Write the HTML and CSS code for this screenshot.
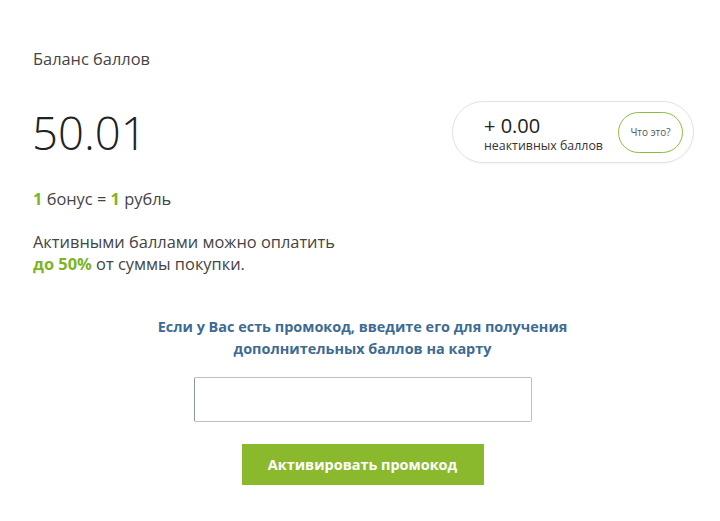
FILE: index.html
```html
<!DOCTYPE html>
<html lang="ru">
<head>
<meta charset="utf-8">
<link rel="stylesheet" href="styles.css">
</head>
<body>
<div class="page">
  <div class="label">Баланс баллов</div>
  <div class="balance-row">
    <div class="balance">50.01</div>
    <div class="pill">
      <div class="pill-text">
        <div class="pill-amount">+ 0.00</div>
        <div class="pill-sub">неактивных баллов</div>
      </div>
      <button class="what">Что это?</button>
    </div>
  </div>
  <p class="rate"><b class="green">1</b> бонус = <b class="green">1</b> рубль</p>
  <p class="info">Активными баллами можно оплатить<br><b class="green">до 50%</b> от суммы покупки.</p>
  <div class="promo">
    <p class="promo-title">Если у Вас есть промокод, введите его для получения<br>дополнительных баллов на карту</p>
    <input class="promo-input" type="text">
    <button class="promo-btn">Активировать промокод</button>
  </div>
</div>
</body>
</html>
```
FILE: styles.css
```css
html, body {
  margin: 0;
  background: #ffffff;
}
body {
  font-family: "Open Sans", "Liberation Sans", sans-serif;
  color: #333333;
}
.page {
  padding: 48px 26px 0 33px;
}
.label {
  font-size: 16.4px;
  line-height: 22px;
  color: #444444;
}
.balance-row {
  display: flex;
  justify-content: space-between;
  align-items: center;
  margin-top: 31px;
}
.balance {
  font-size: 45.5px;
  font-weight: 300;
  line-height: 60px;
  color: #222222;
  margin-left: -1px;
}
.pill {
  display: flex;
  align-items: center;
  gap: 14px;
  box-sizing: border-box;
  width: 242px;
  height: 62px;
  border: 1px solid #e2e2e2;
  border-radius: 31px;
  padding: 0 10px 0 31px;
  box-shadow: 0 1px 2px rgba(0,0,0,0.04);
}
.pill-text {
  flex: 1;
  white-space: nowrap;
  margin-top: 8px;
}
.pill-amount {
  font-size: 20px;
  line-height: 20px;
  color: #222222;
}
.pill-sub {
  font-size: 12.4px;
  line-height: 20px;
  color: #333333;
}
.what {
  flex: none;
  width: 65px;
  height: 41px;
  border: 1px solid #8cbd3a;
  border-radius: 21px;
  background: #ffffff;
  font-family: "Open Sans", "Liberation Sans", sans-serif;
  font-size: 10px;
  color: #555555;
  padding: 0;
}
.rate {
  margin: 25px 0 0;
  font-size: 16.4px;
  line-height: 22px;
  color: #444444;
}
.info {
  margin: 21px 0 0;
  font-size: 16.4px;
  line-height: 22px;
  color: #444444;
}
.green {
  color: #7cb51f;
  font-weight: 700;
}
.promo {
  display: flex;
  flex-direction: column;
  align-items: center;
  margin-left: -33px;
  margin-right: -26px;
  padding-left: 5px;
}
.promo-title {
  margin: 41px 0 0;
  text-align: center;
  font-size: 14.45px;
  line-height: 22px;
  font-weight: 700;
  color: #3e6b91;
}
.promo-input {
  box-sizing: border-box;
  width: 338px;
  height: 45px;
  margin-top: 17px;
  border: 1px solid #b9c0c6;
  border-left-color: #8e969c;
  border-radius: 2px;
  background: #ffffff;
}
.promo-btn {
  margin-top: 22px;
  width: 242px;
  height: 41px;
  border: none;
  background: #8ab92d;
  color: #ffffff;
  font-family: "Open Sans", "Liberation Sans", sans-serif;
  font-weight: 700;
  font-size: 14.45px;
}
```
